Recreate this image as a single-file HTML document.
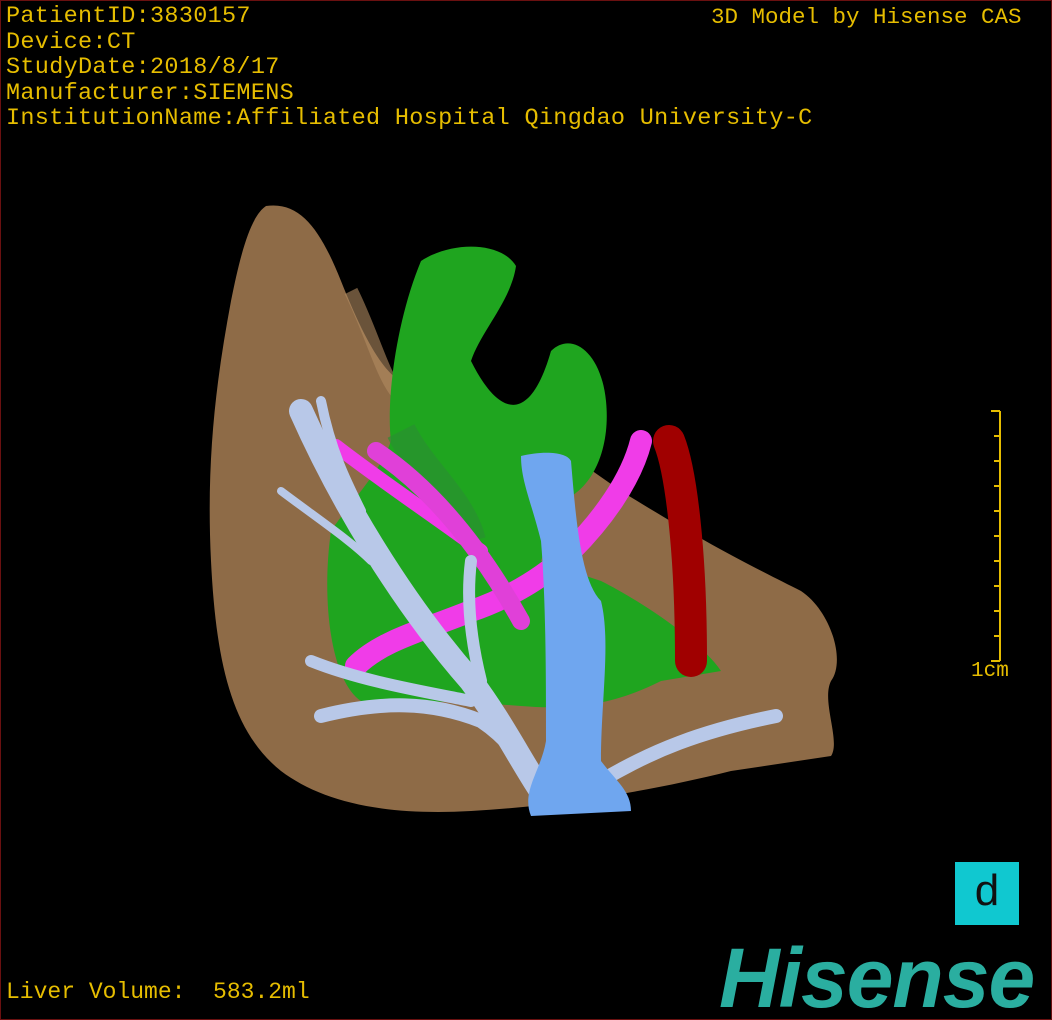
<!DOCTYPE html>
<html><head><meta charset="utf-8"><style>
html,body{margin:0;padding:0;background:#000;}
#c{position:relative;width:1050px;height:1018px;border:1px solid #6a1010;background:#000;overflow:hidden;color:#e6bd00;}
.t{position:absolute;font-family:"Liberation Mono",monospace;font-size:23.5px;line-height:25.5px;white-space:pre;}
</style></head><body><div id="c">
<div class="t" style="left:5px;top:3px;letter-spacing:0.3px">PatientID:3830157<br>Device:CT<br>StudyDate:2018/8/17<br>Manufacturer:SIEMENS<br>InstitutionName:Affiliated Hospital Qingdao University-C</div>
<div class="t" style="left:710px;top:4px;font-size:22.5px">3D Model by Hisense CAS</div>
<div class="t" style="left:5px;top:979px;font-size:23px">Liver Volume:  583.2ml</div>
<div class="t" style="left:970px;top:658px;font-size:21px">1cm</div>
<svg style="position:absolute;left:0;top:0" width="1050" height="1018">
<g stroke="#e6bd00" stroke-width="2" fill="none">
<line x1="999" y1="410" x2="999" y2="660"/>
<path d="M990 410h9M993 435h6M993 460h6M993 485h6M993 510h6M993 535h6M993 560h6M993 585h6M993 610h6M993 635h6M990 660h9"/>
</g>
<path d="M265 205 C300 200 320 230 340 280 C360 330 380 370 400 380 L520 420 L620 490 C700 540 760 570 800 590 C830 610 845 660 830 680 C820 700 840 740 830 755 L730 770 C650 790 560 805 470 810 C380 815 320 800 280 770 C230 730 215 660 210 560 C205 460 215 380 230 300 C240 250 250 215 265 205Z" fill="#8e6b47"/>
<path d="M350 290 C370 330 380 370 395 390" stroke="#b08a60" stroke-width="14" fill="none" opacity=".6"/>
<path d="M420 260 C450 240 500 240 515 265 C510 300 480 330 470 360 C500 420 530 420 550 350 C570 330 600 350 605 400 C610 450 590 490 560 500 L540 560 L600 580 C640 600 700 640 720 670 L660 680 C620 700 580 710 520 705 C460 700 400 700 360 700 C330 680 320 600 330 530 C350 500 380 470 390 440 C385 400 395 320 420 260Z" fill="#1fa51f"/>
<path d="M400 430 C420 470 460 500 470 540" stroke="#2a9030" stroke-width="30" fill="none" opacity=".7"/>
<path d="M640 440 C630 480 600 520 570 550 C540 580 500 600 470 610 C420 630 380 640 355 665" stroke="#f03ce8" stroke-width="22" fill="none" stroke-linecap="round"/>
<path d="M335 445 C380 480 440 520 480 550" stroke="#f03ce8" stroke-width="14" fill="none" stroke-linecap="round"/>
<path d="M375 450 C420 480 470 530 520 620" stroke="#e040d8" stroke-width="18" fill="none" stroke-linecap="round"/>
<path d="M668 440 C680 470 690 550 690 660" stroke="#a00000" stroke-width="32" fill="none" stroke-linecap="round"/>
<g stroke="#b8c8e8" fill="none" stroke-linecap="round">
<path d="M300 410 C340 500 400 600 470 680 C500 720 520 760 540 790" stroke-width="24"/>
<path d="M320 400 C330 450 345 480 360 510" stroke-width="10"/>
<path d="M280 490 C320 520 350 540 370 560" stroke-width="8"/>
<path d="M310 660 C360 680 420 690 470 700" stroke-width="12"/>
<path d="M320 715 C380 700 430 700 480 720 C510 740 530 770 540 790" stroke-width="14"/>
<path d="M600 780 C650 750 700 730 775 715" stroke-width="14"/>
<path d="M470 560 C465 600 470 640 480 680" stroke-width="12"/>
</g>
<path d="M520 455 C540 450 565 450 570 460 C575 520 580 580 600 600 C610 640 600 700 600 760 C615 780 630 790 630 810 L530 815 C520 790 540 770 545 740 C545 680 545 600 540 540 C530 500 520 480 520 455Z" fill="#6fa6ef"/>
</svg>
<div style="position:absolute;left:954px;top:861px;width:64px;height:63px;background:#10c8d0;color:#111;font:44px/58px 'Liberation Sans',sans-serif;text-align:center">d</div>
<div style="position:absolute;left:718px;top:932px;color:#2aaea0;font:italic bold 84px/90px 'Liberation Sans',sans-serif;letter-spacing:-1px">Hisense</div>
</div></body></html>
